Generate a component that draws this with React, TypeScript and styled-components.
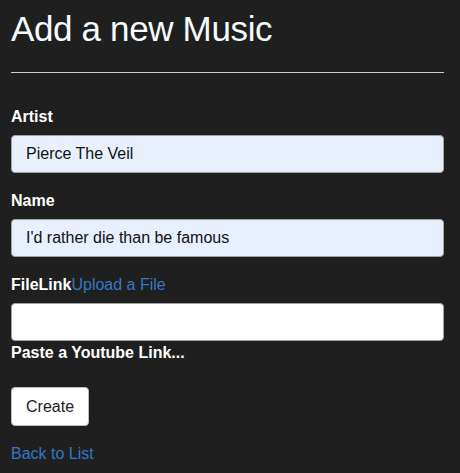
import React from 'react';
import styled, { createGlobalStyle } from 'styled-components';

const GlobalStyle = createGlobalStyle`
  html, body {
    margin: 0;
    padding: 0;
    background: #1f1f1f;
  }
  body {
    font-family: "Liberation Sans", Arial, sans-serif;
    color: #fff;
  }
`;

const Page = styled.div`
  width: 433px;
  padding: 9px 0 0 11px;
  display: flex;
  flex-direction: column;
  align-items: flex-start;
`;

const Title = styled.h1`
  margin: 0;
  font-size: 35px;
  line-height: 40px;
  letter-spacing: -0.35px;
  font-weight: 400;
  color: #f4fbff;
`;

const Rule = styled.hr`
  align-self: stretch;
  margin: 23px 0 0;
  border: none;
  border-top: 1px solid #cfcfcf;
  height: 0;
`;

const Field = styled.div<{ $first?: boolean }>`
  align-self: stretch;
  display: flex;
  flex-direction: column;
  margin-top: ${p => (p.$first ? '34px' : '18px')};
`;

const Label = styled.label`
  font-size: 16px;
  line-height: 20px;
  font-weight: 700;
  color: #fff;
  margin-bottom: 8px;
`;

const Link = styled.a`
  font-weight: 400;
  color: #3478c6;
  text-decoration: none;
  cursor: pointer;
`;

const Input = styled.input<{ $filled?: boolean }>`
  box-sizing: border-box;
  width: 100%;
  height: 38px;
  padding: 0 14px;
  border: 1px solid #a3a3a3;
  border-radius: 4px;
  background: ${p => (p.$filled ? '#e8f0fe' : '#fff')};
  font-family: "Liberation Sans", Arial, sans-serif;
  font-size: 16px;
  color: #111;
  outline: none;
`;

const Hint = styled.div`
  margin-top: 2px;
  font-size: 16px;
  line-height: 20px;
  font-weight: 700;
  color: #fff;
`;

const CreateButton = styled.button`
  box-sizing: border-box;
  margin-top: 24px;
  height: 39px;
  padding: 0 14px;
  border: 1px solid #bdbdbd;
  border-radius: 4px;
  background: #fff;
  font-family: "Liberation Sans", Arial, sans-serif;
  font-size: 16px;
  color: #222;
  cursor: pointer;
`;

const BackLink = styled(Link)`
  margin-top: 18px;
  font-size: 16px;
  line-height: 20px;
`;

export default function App() {
  return (
    <>
      <GlobalStyle />
      <Page>
        <Title>Add a new Music</Title>
        <Rule />
        <Field $first>
          <Label>Artist</Label>
          <Input $filled defaultValue="Pierce The Veil" />
        </Field>
        <Field>
          <Label>Name</Label>
          <Input $filled defaultValue="I'd rather die than be famous" />
        </Field>
        <Field>
          <Label>
            FileLink<Link>Upload a File</Link>
          </Label>
          <Input />
          <Hint>Paste a Youtube Link...</Hint>
        </Field>
        <CreateButton>Create</CreateButton>
        <BackLink>Back to List</BackLink>
      </Page>
    </>
  );
}
